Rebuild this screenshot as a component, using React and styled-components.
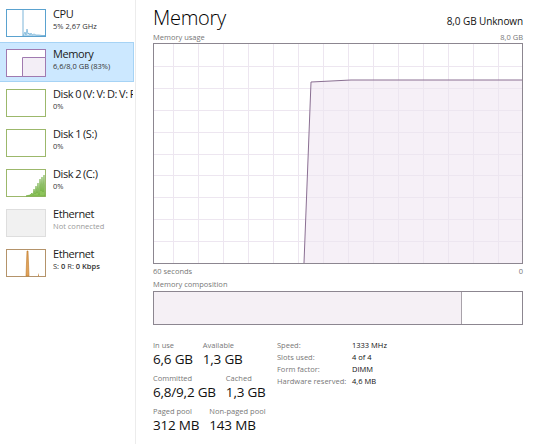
import React from 'react';
import styled, { createGlobalStyle } from 'styled-components';

const GlobalStyle = createGlobalStyle`
  html, body { margin: 0; padding: 0; background: #fff; }
  body { font-family: "Open Sans", "Noto Sans", sans-serif; color: #000; }
`;

const
  Page = styled.div`
    display: flex;
    width: 540px;
    height: 444px;
    overflow: hidden;
    background: #fff;
  `,
  Sidebar = styled.div`
    width: 136px;
    flex-shrink: 0;
    padding-top: 2px;
    border-right: 1px solid #ececec;
    box-sizing: border-box;
  `,
  Item = styled.div`
    display: flex;
    align-items: flex-start;
    height: 40px;
    box-sizing: border-box;
    padding: 6px 0 0 6px;
    gap: 7px;
    background: ${p => p.active ? '#cce8ff' : 'transparent'};
    border: 1px solid ${p => p.active ? '#a6d3f5' : 'transparent'};
    border-left: none;
    margin-right: 1px;
    overflow: hidden;
  `,
  Thumb = styled.svg`
    width: 40px;
    height: 28px;
    flex-shrink: 0;
    display: block;
  `,
  ItemText = styled.div`
    display: flex;
    flex-direction: column;
    white-space: nowrap;
    margin-top: -2px;
    min-width: 0;
  `,
  ItemTitle = styled.div`
    font-size: 11px;
    line-height: 14px;
    color: #1a1a1a;
    letter-spacing: -0.4px;
    word-spacing: -0.5px;
  `,
  ItemSub = styled.div`
    font-size: 7.5px;
    line-height: 10px;
    color: ${p => p.muted ? '#9a9a9a' : '#333'};
    b { font-weight: 600; }
  `,
  Main = styled.div`
    flex: 1;
    padding: 0 17px;
    display: flex;
    flex-direction: column;
  `,
  Header = styled.div`
    display: flex;
    justify-content: space-between;
    align-items: baseline;
    height: 32px;
    padding-top: 3px;
    box-sizing: border-box;
  `,
  Title = styled.div`
    font-size: 20px;
    font-weight: 300;
    line-height: 29px;
    letter-spacing: -0.3px;
  `,
  HeaderRight = styled.div`
    font-size: 10px;
    color: #111;
    letter-spacing: -0.1px;
  `,
  Caption = styled.div`
    display: flex;
    justify-content: space-between;
    font-size: 7.5px;
    line-height: 10px;
    color: #777;
    height: 10px;
    margin-top: ${p => p.top || 0}px;
  `,
  Chart = styled.div`
    margin-top: 1px;
    height: 221px;
    border: 1px solid #8c8690;
    box-sizing: border-box;
    svg { display: block; }
  `,
  Composition = styled.div`
    margin-top: 2px;
    height: 34px;
    display: flex;
    border: 1px solid #8c8690;
    box-sizing: border-box;
  `,
  CompUsed = styled.div`
    width: ${p => p.pct}%;
    background: #f5f0f5;
    border-right: 1px solid #a8a2aa;
  `,
  Stats = styled.div`
    display: flex;
    margin-top: 15px;
  `,
  StatsLeft = styled.div`
    width: 124px;
    display: flex;
    flex-direction: column;
    gap: 5px;
  `,
  StatRow = styled.div`
    display: flex;
    gap: 10px;
  `,
  Stat = styled.div`
    display: flex;
    flex-direction: column;
  `,
  StatLabel = styled.div`
    font-size: 7.5px;
    line-height: 10px;
    color: #777;
  `,
  StatValue = styled.div`
    font-size: 13.5px;
    line-height: 18px;
    color: #111;
    letter-spacing: -0.2px;
  `,
  Details = styled.div`
    display: grid;
    grid-template-columns: 75px auto;
    row-gap: 1px;
    font-size: 7.5px;
    line-height: 11px;
    align-content: start;
  `,
  DLabel = styled.div`
    color: #777;
  `,
  DValue = styled.div`
    color: #111;
  `;

const CpuThumb = () => (
  <Thumb viewBox="0 0 40 28">
    <rect x="0.5" y="0.5" width="39" height="27" fill="#fff" stroke="#5aa2cf" />
    <line x1="17" y1="1" x2="17" y2="27" stroke="#5aa2cf" strokeWidth="0.8" />
    <path d="M17 27 L18 25 L19 23 L20 26 L21 20 L22 25 L23 24 L24 26 L25 24 L26 26 L28 25 L30 26 L33 26 L36 26.5 L39 26.5 L39 27 L17 27 Z" fill="#d9ecf7" stroke="#5aa2cf" strokeWidth="0.6" />
  </Thumb>
);

const MemThumb = () => (
  <Thumb viewBox="0 0 40 28">
    <rect x="0.5" y="0.5" width="39" height="27" fill="#fff" stroke="#a07ab0" />
    <path d="M16.5 27.5 L16.5 8.5 L39.5 8.5 L39.5 27.5 Z" fill="#f3eef6" stroke="#a07ab0" />
  </Thumb>
);

const DiskThumb = ({ spikes }) => (
  <Thumb viewBox="0 0 40 28">
    <rect x="0.5" y="0.5" width="39" height="27" fill="#fff" stroke="#9cb86b" />
    {spikes && (
      <path d="M20 27 L24 26 L26 24 L27 26 L28 20 L29 25 L30 17 L31 24 L32 14 L33 26 L34 10 L35 22 L36 8 L37 23 L38 6 L39 27 Z" fill="#8dc45a" stroke="#6aa83a" strokeWidth="0.6" />
    )}
  </Thumb>
);

const EthOffThumb = () => (
  <Thumb viewBox="0 0 40 28">
    <rect x="0.5" y="0.5" width="39" height="27" fill="#f1f1f1" stroke="#dedede" />
  </Thumb>
);

const EthThumb = () => (
  <Thumb viewBox="0 0 40 28">
    <rect x="0.5" y="0.5" width="39" height="27" fill="#fff" stroke="#b4936a" />
    <path d="M20 27 L21 2 L22 2 L23 27 Z" fill="#e0a25a" stroke="#c07a2a" strokeWidth="0.6" />
    <path d="M32 27 L32.5 24 L33 27 Z" fill="#c07a2a" />
  </Thumb>
);

const items = [
  { title: 'CPU', sub: '5% 2,67 GHz', thumb: <CpuThumb /> },
  { title: 'Memory', sub: '6,6/8,0 GB (83%)', thumb: <MemThumb />, active: true },
  { title: 'Disk 0 (V: V: D: V: F', sub: '0%', thumb: <DiskThumb /> },
  { title: 'Disk 1 (S:)', sub: '0%', thumb: <DiskThumb /> },
  { title: 'Disk 2 (C:)', sub: '0%', thumb: <DiskThumb spikes /> },
  { title: 'Ethernet', sub: 'Not connected', thumb: <EthOffThumb />, muted: true },
  { title: 'Ethernet', sub: <>S: <b>0</b> R: <b>0 Kbps</b></>, thumb: <EthThumb /> },
];

const W = 368, H = 219;

const UsageGraph = () => {
  const vlines = [];
  for (let x = 19; x < W; x += 25) vlines.push(x);
  const hlines = [];
  for (let i = 1; i < 10; i++) hlines.push(Math.round(i * H / 10) + 0.5);
  return (
    <svg width={W} height={H} viewBox={`0 0 ${W} ${H}`}>
      <path d={`M150 ${H} L157 38 L197 36 L${W} 36 L${W} ${H} Z`} fill="#f6f0f7" />
      {vlines.map(x => <line key={'v' + x} x1={x + 0.5} y1="0" x2={x + 0.5} y2={H} stroke="#ede6f0" strokeWidth="1" />)}
      {hlines.map(y => <line key={'h' + y} x1="0" y1={y} x2={W} y2={y} stroke="#ede6f0" strokeWidth="1" />)}
      <path d={`M150 ${H} L157 38 L197 36 L${W} 36`} fill="none" stroke="#8a6f92" strokeWidth="1" />
    </svg>
  );
};

const stats = [
  [['In use', '6,6 GB'], ['Available', '1,3 GB']],
  [['Committed', '6,8/9,2 GB'], ['Cached', '1,3 GB']],
  [['Paged pool', '312 MB'], ['Non-paged pool', '143 MB']],
];

const details = [
  ['Speed:', '1333 MHz'],
  ['Slots used:', '4 of 4'],
  ['Form factor:', 'DIMM'],
  ['Hardware reserved:', '4,6 MB'],
];

export default function App() {
  return (
    <Page>
      <GlobalStyle />
      <Sidebar>
        {items.map((it, i) => (
          <Item key={i} active={it.active}>
            {it.thumb}
            <ItemText>
              <ItemTitle>{it.title}</ItemTitle>
              <ItemSub muted={it.muted}>{it.sub}</ItemSub>
            </ItemText>
          </Item>
        ))}
      </Sidebar>
      <Main>
        <Header>
          <Title>Memory</Title>
          <HeaderRight>8,0 GB Unknown</HeaderRight>
        </Header>
        <Caption><span>Memory usage</span><span>8,0 GB</span></Caption>
        <Chart><UsageGraph /></Chart>
        <Caption top={2}><span>60 seconds</span><span>0</span></Caption>
        <Caption top={3}><span>Memory composition</span></Caption>
        <Composition>
          <CompUsed pct={83.5} />
        </Composition>
        <Stats>
          <StatsLeft>
            {stats.map((row, i) => (
              <StatRow key={i}>
                {row.map(([label, value]) => (
                  <Stat key={label}><StatLabel>{label}</StatLabel><StatValue>{value}</StatValue></Stat>
                ))}
              </StatRow>
            ))}
          </StatsLeft>
          <Details>
            {details.map(([label, value]) => (
              <React.Fragment key={label}>
                <DLabel>{label}</DLabel><DValue>{value}</DValue>
              </React.Fragment>
            ))}
          </Details>
        </Stats>
      </Main>
    </Page>
  );
}
